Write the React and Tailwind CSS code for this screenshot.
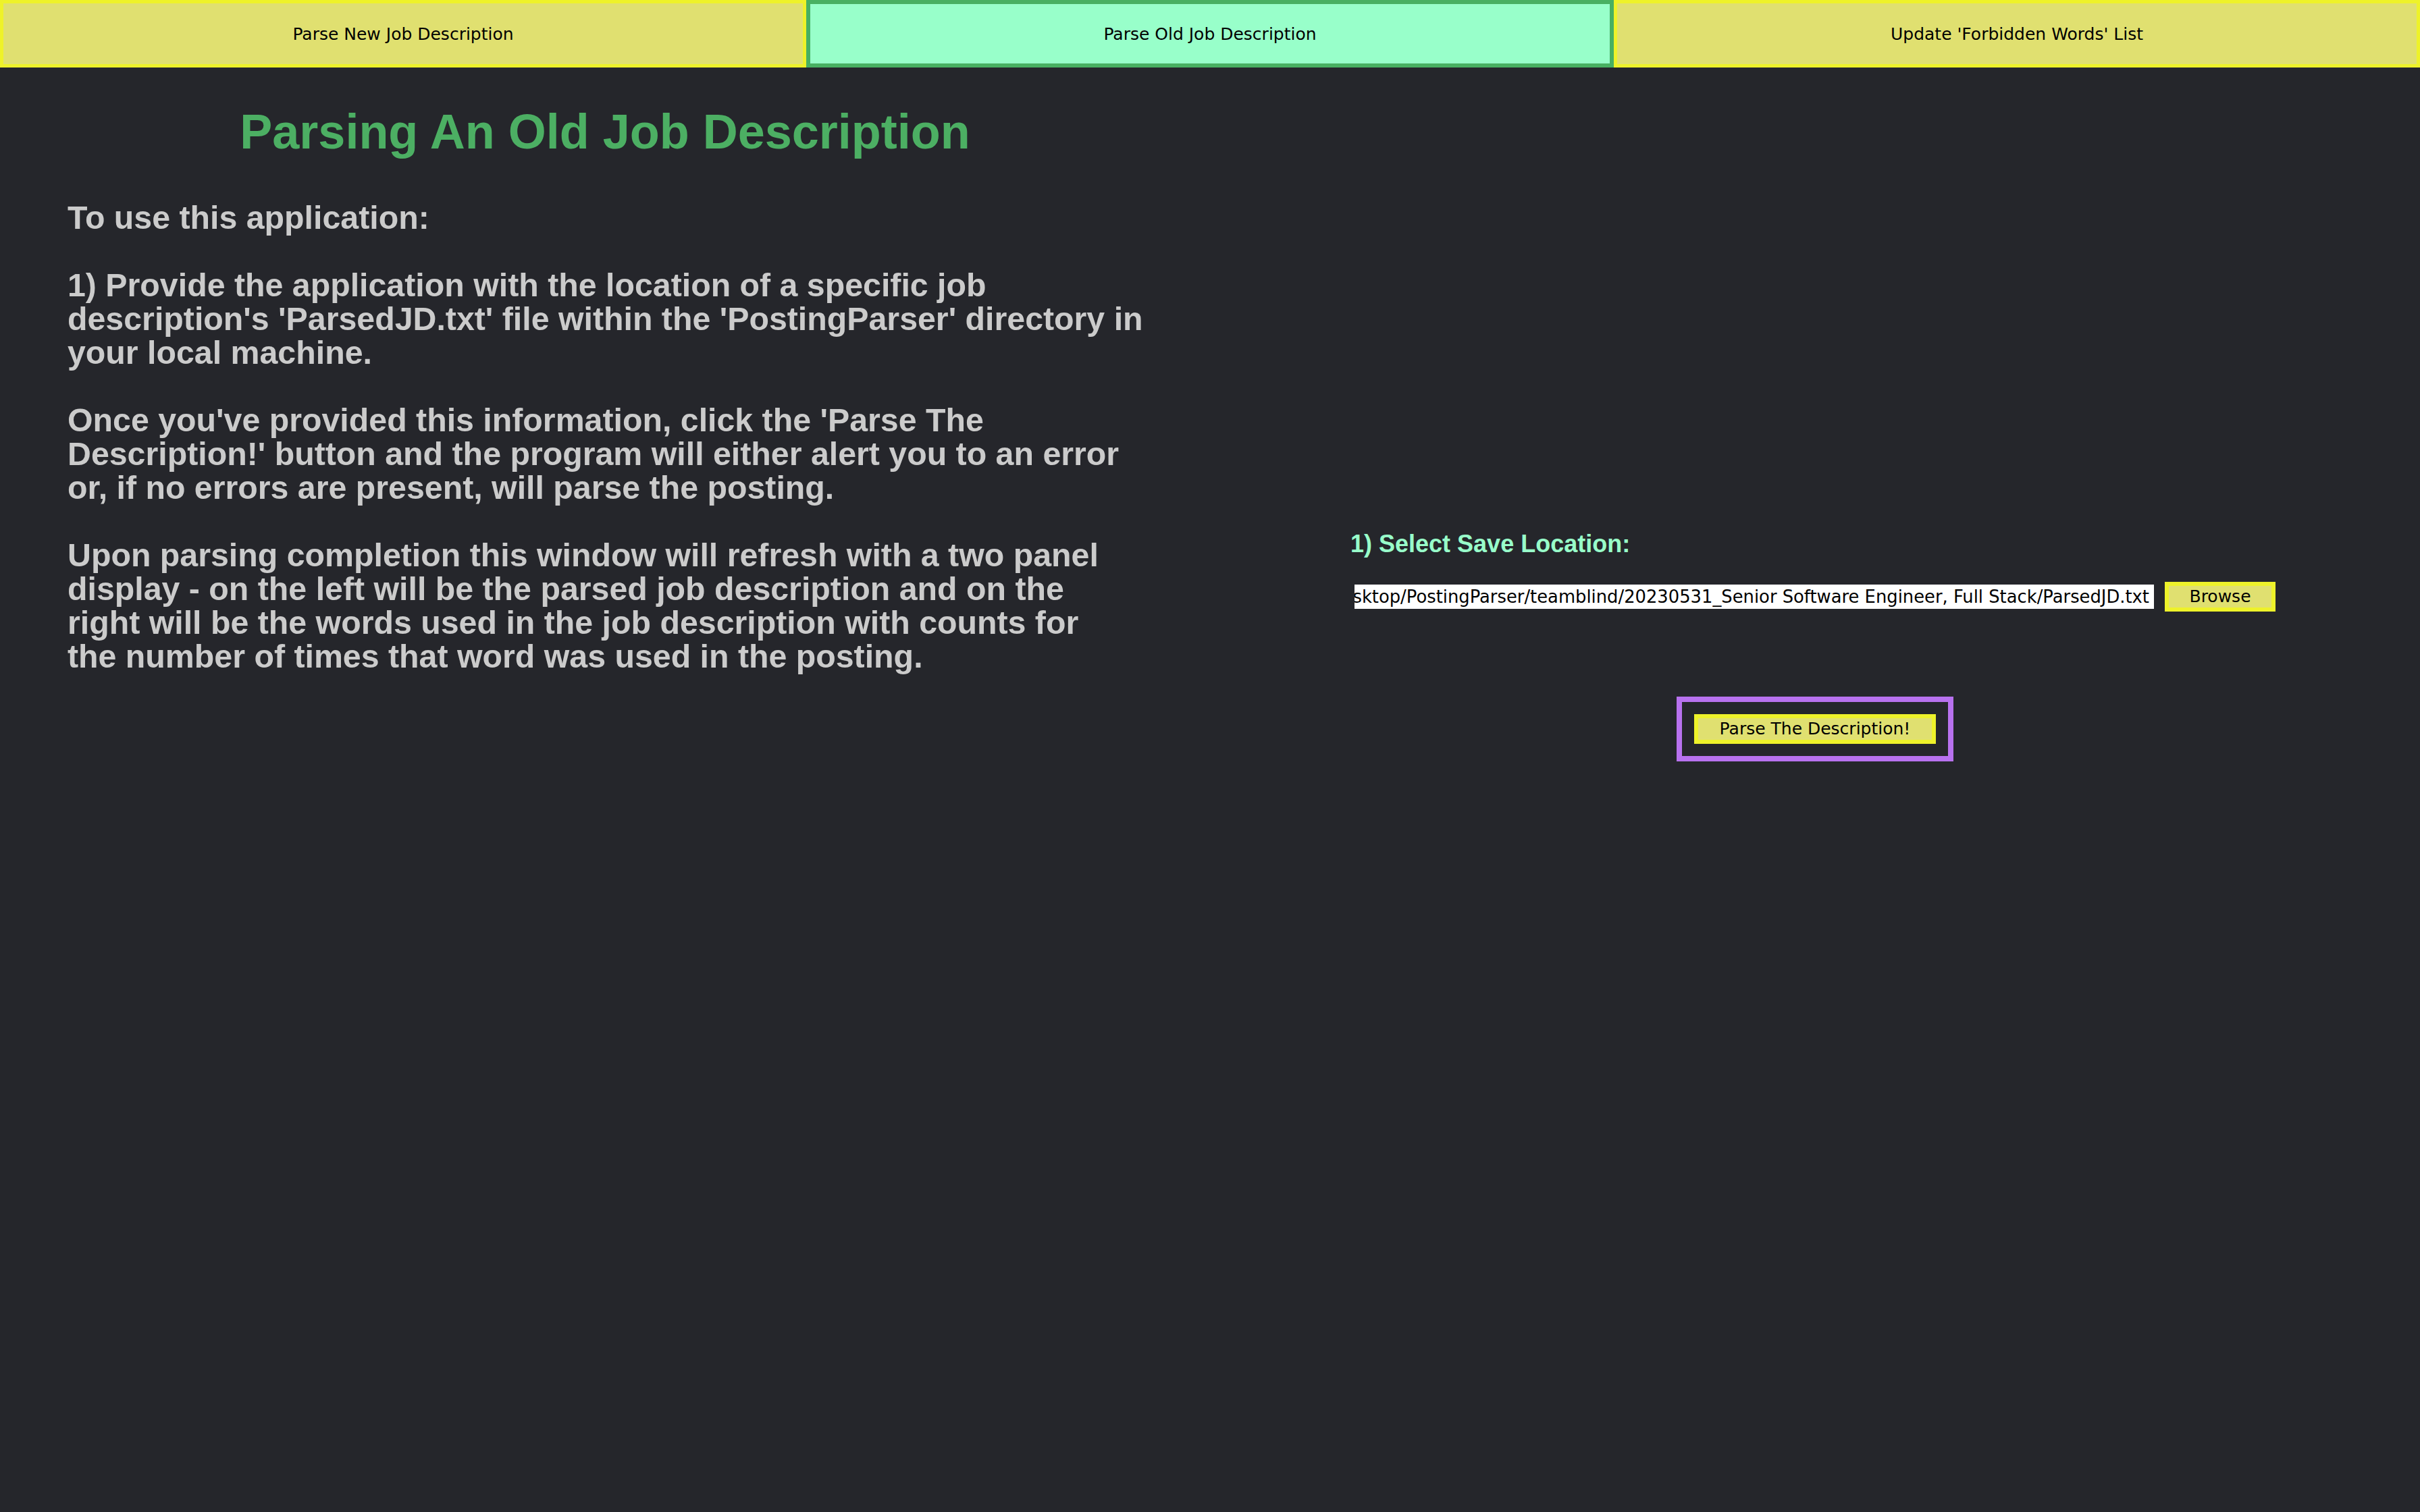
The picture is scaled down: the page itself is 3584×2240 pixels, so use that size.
export default function App() {
  const tabs = [
    { label: "Parse New Job Description", active: false },
    { label: "Parse Old Job Description", active: true },
    { label: "Update 'Forbidden Words' List", active: false },
  ];
  const paras = [
    ["To use this application:"],
    [
      "1) Provide the application with the location of a specific job",
      "description's 'ParsedJD.txt' file within the 'PostingParser' directory in",
      "your local machine.",
    ],
    [
      "Once you've provided this information, click the 'Parse The",
      "Description!' button and the program will either alert you to an error",
      "or, if no errors are present, will parse the posting.",
    ],
    [
      "Upon parsing completion this window will refresh with a two panel",
      "display - on the left will be the parsed job description and on the",
      "right will be the words used in the job description with counts for",
      "the number of times that word was used in the posting.",
    ],
  ];
  return (
    <div className="w-full min-h-screen bg-[#25262b] flex flex-col">
      <div className="flex h-[100px] w-full">
        {tabs.map((t) => (
          <div
            key={t.label}
            className={
              t.active
                ? "flex-1 flex items-center justify-center pt-[2px] border-[6px] border-[#48b062] bg-[#98ffca] text-black text-[25px] font-['DejaVu_Sans',sans-serif]"
                : "flex-1 flex items-center justify-center pt-[2px] border-[5px] border-[#eef22a] bg-[#e0e070] text-black text-[25px] font-['DejaVu_Sans',sans-serif]"
            }
          >
            {t.label}
          </div>
        ))}
      </div>
      <div className="flex flex-1">
        <div className="w-1/2 px-[100px] font-['Liberation_Sans',Arial,sans-serif]">
          <h1 className="mt-[59px] text-center text-[72px] leading-none font-bold text-[#4caf63]">
            Parsing An Old Job Description
          </h1>
          <div className="mt-[66px] text-[48.3px] leading-[50px] font-bold text-[#cbcbcb] whitespace-nowrap">
            {paras.map((lines, i) => (
              <p key={i} className={i === 0 ? "" : "mt-[50px]"}>
                {lines.map((l, j) => (
                  <span key={j} className="block">
                    {l}
                  </span>
                ))}
              </p>
            ))}
          </div>
        </div>
        <div className="w-1/2 flex flex-col items-center pt-[688px]">
          <div className="flex flex-col items-start">
            <div className="-ml-[6px] text-[36px] leading-none font-bold text-[#98ffca] font-['Liberation_Sans',Arial,sans-serif]">
              1) Select Save Location:
            </div>
            <div className="mt-[38px] flex items-center gap-[16px] h-[44px]">
              <div className="w-[1184px] h-[36px] bg-white flex items-center justify-end overflow-hidden pr-[7px] text-[25.8px] text-black whitespace-nowrap font-['DejaVu_Sans',sans-serif]">
                <span className="shrink-0">/Users/jobseeker/Desktop/PostingParser/teamblind/20230531_Senior Software Engineer, Full Stack/ParsedJD.txt</span>
              </div>
              <button className="w-[164px] h-[44px] border-[6px] border-[#eef22a] bg-[#e0e070] text-black text-[25px] flex items-center justify-center font-['DejaVu_Sans',sans-serif]">
                Browse
              </button>
            </div>
          </div>
          <div className="mt-[126px] border-[8px] border-[#b871ef] p-[18px]">
            <button className="w-[358px] h-[44px] border-[6px] border-[#eef22a] bg-[#e0e070] text-black text-[25px] flex items-center justify-center font-['DejaVu_Sans',sans-serif]">
              Parse The Description!
            </button>
          </div>
        </div>
      </div>
    </div>
  );
}
